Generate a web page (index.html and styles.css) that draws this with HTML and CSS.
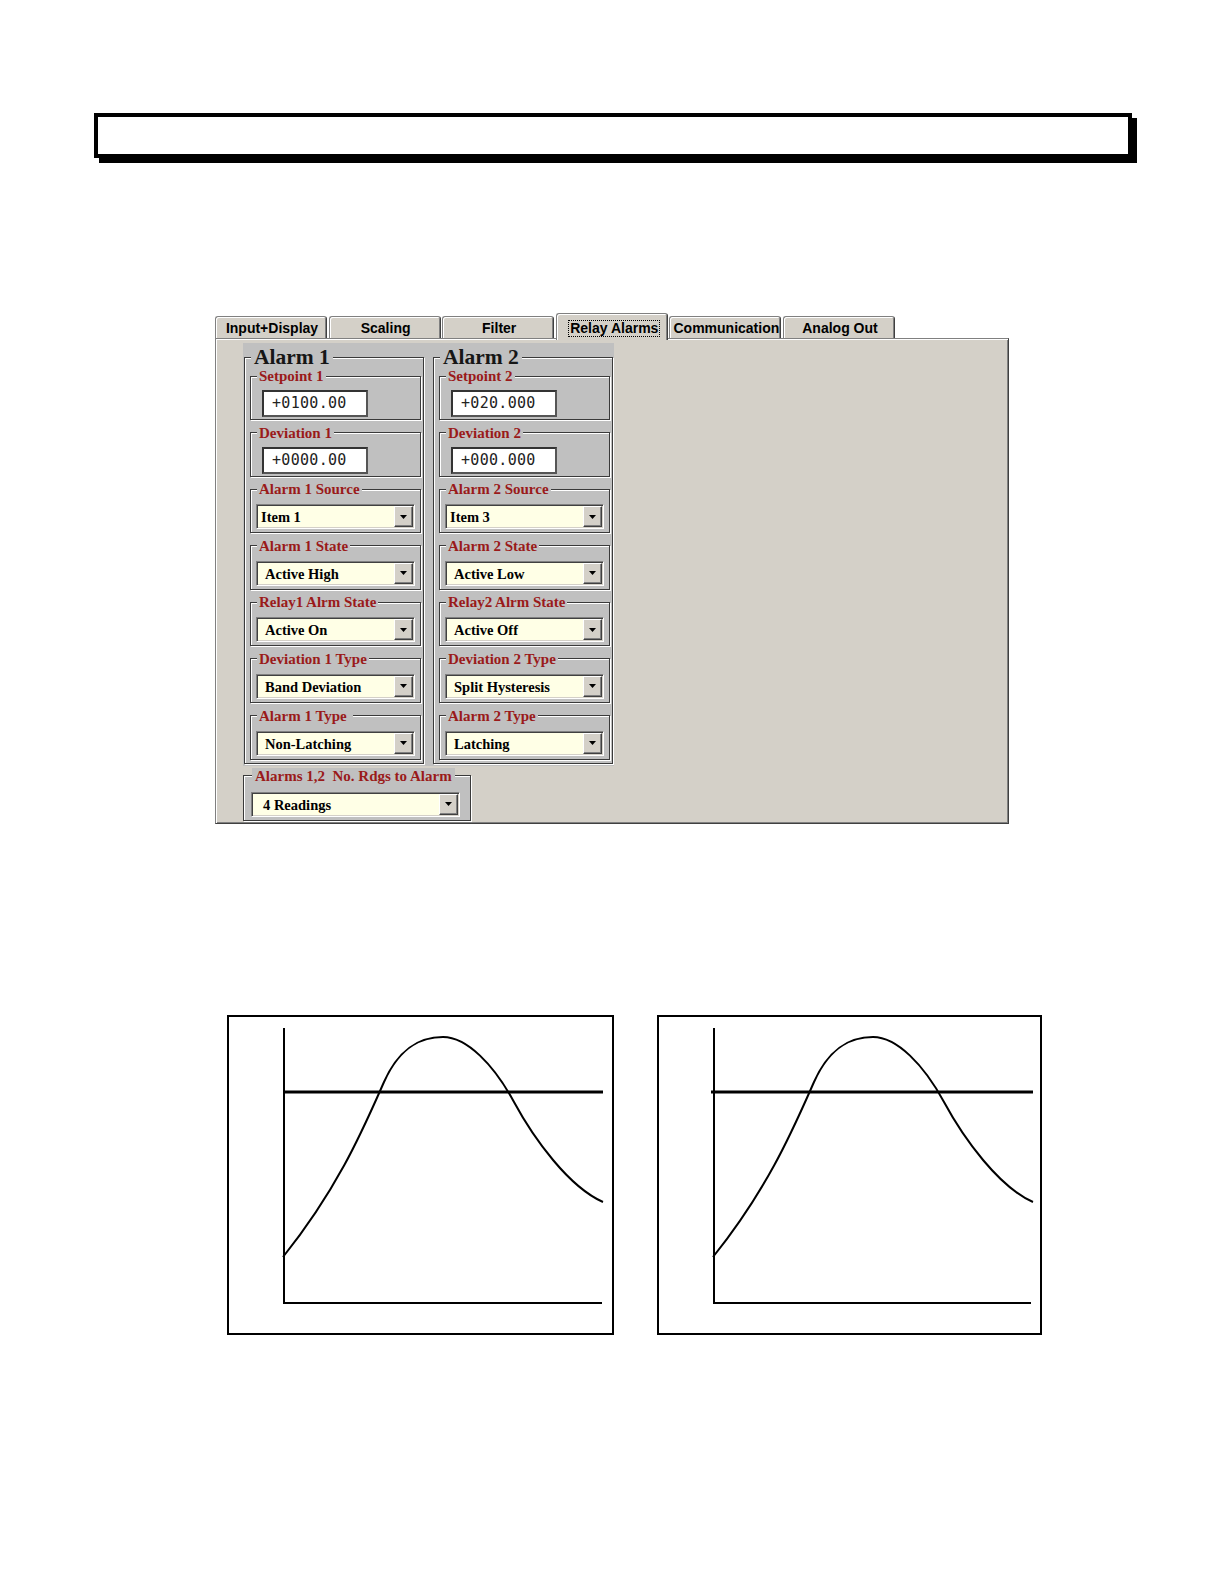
FILE: index.html
```html
<!DOCTYPE html>
<html>
<head>
<meta charset="utf-8">
<title>Relay Alarms</title>
<link rel="stylesheet" href="styles.css">
</head>
<body>
<div class="page">
  <div class="title-box"></div>

  <div class="tabctl">
    <div class="tabs">
      <div class="tab">Input+Display</div>
      <div class="tab">Scaling</div>
      <div class="tab">Filter</div>
      <div class="tab tab-active"><span class="focus">Relay Alarms</span></div>
      <div class="tab">Communication</div>
      <div class="tab">Analog Out</div>
    </div>
    <div class="panel">
      <div class="alarms">
        <fieldset class="alarm">
          <legend class="alarm-title">Alarm 1</legend>
          <fieldset class="sub sub-num"><legend>Setpoint 1</legend><div class="num">+0100.00</div></fieldset>
          <fieldset class="sub sub-num"><legend>Deviation 1</legend><div class="num">+0000.00</div></fieldset>
          <fieldset class="sub"><legend>Alarm 1 Source</legend><div class="combo"><span class="val">Item 1</span><span class="btn"><svg width="7" height="4" viewBox="0 0 7 4"><polygon points="0,0 7,0 3.5,4" fill="#000"/></svg></span></div></fieldset>
          <fieldset class="sub"><legend>Alarm 1 State</legend><div class="combo"><span class="val ind">Active High</span><span class="btn"><svg width="7" height="4" viewBox="0 0 7 4"><polygon points="0,0 7,0 3.5,4" fill="#000"/></svg></span></div></fieldset>
          <fieldset class="sub"><legend>Relay1 Alrm State</legend><div class="combo"><span class="val ind">Active On</span><span class="btn"><svg width="7" height="4" viewBox="0 0 7 4"><polygon points="0,0 7,0 3.5,4" fill="#000"/></svg></span></div></fieldset>
          <fieldset class="sub"><legend>Deviation 1 Type</legend><div class="combo"><span class="val ind">Band Deviation</span><span class="btn"><svg width="7" height="4" viewBox="0 0 7 4"><polygon points="0,0 7,0 3.5,4" fill="#000"/></svg></span></div></fieldset>
          <fieldset class="sub"><legend>Alarm 1 Type&nbsp;</legend><div class="combo"><span class="val ind">Non-Latching</span><span class="btn"><svg width="7" height="4" viewBox="0 0 7 4"><polygon points="0,0 7,0 3.5,4" fill="#000"/></svg></span></div></fieldset>
        </fieldset>

        <fieldset class="alarm">
          <legend class="alarm-title">Alarm 2</legend>
          <fieldset class="sub sub-num"><legend>Setpoint 2</legend><div class="num">+020.000</div></fieldset>
          <fieldset class="sub sub-num"><legend>Deviation 2</legend><div class="num">+000.000</div></fieldset>
          <fieldset class="sub"><legend>Alarm 2 Source</legend><div class="combo"><span class="val">Item 3</span><span class="btn"><svg width="7" height="4" viewBox="0 0 7 4"><polygon points="0,0 7,0 3.5,4" fill="#000"/></svg></span></div></fieldset>
          <fieldset class="sub"><legend>Alarm 2 State</legend><div class="combo"><span class="val ind">Active Low</span><span class="btn"><svg width="7" height="4" viewBox="0 0 7 4"><polygon points="0,0 7,0 3.5,4" fill="#000"/></svg></span></div></fieldset>
          <fieldset class="sub"><legend>Relay2 Alrm State</legend><div class="combo"><span class="val ind">Active Off</span><span class="btn"><svg width="7" height="4" viewBox="0 0 7 4"><polygon points="0,0 7,0 3.5,4" fill="#000"/></svg></span></div></fieldset>
          <fieldset class="sub"><legend>Deviation 2 Type</legend><div class="combo"><span class="val ind">Split Hysteresis</span><span class="btn"><svg width="7" height="4" viewBox="0 0 7 4"><polygon points="0,0 7,0 3.5,4" fill="#000"/></svg></span></div></fieldset>
          <fieldset class="sub"><legend>Alarm 2 Type</legend><div class="combo"><span class="val ind">Latching</span><span class="btn"><svg width="7" height="4" viewBox="0 0 7 4"><polygon points="0,0 7,0 3.5,4" fill="#000"/></svg></span></div></fieldset>
        </fieldset>
      </div>

      <fieldset class="sub rdgs"><legend>Alarms 1,2&nbsp; No. Rdgs to Alarm</legend><div class="combo combo-wide"><span class="val ind2">4 Readings</span><span class="btn"><svg width="7" height="4" viewBox="0 0 7 4"><polygon points="0,0 7,0 3.5,4" fill="#000"/></svg></span></div></fieldset>
    </div>
  </div>

  <div class="graphs">
    <div class="graph">
      <svg class="plot" width="383" height="316">
        <line x1="55" y1="11" x2="55" y2="287" stroke="#000" stroke-width="2"/>
        <line x1="54" y1="286" x2="373" y2="286" stroke="#000" stroke-width="2"/>
        <line x1="54" y1="75" x2="374" y2="75" stroke="#000" stroke-width="3"/>
        <path d="M54,240 C110,170 135,110 155,65 C172,27 195,20 214,20 C238,20 265,48 285,85 C305,122 340,170 374,185" fill="none" stroke="#000" stroke-width="2"/>
      </svg>
    </div>
    <div class="graph graph-right">
      <svg class="plot" width="381" height="316">
        <line x1="55" y1="11" x2="55" y2="287" stroke="#000" stroke-width="2"/>
        <line x1="54" y1="286" x2="372" y2="286" stroke="#000" stroke-width="2"/>
        <line x1="52" y1="75" x2="374" y2="75" stroke="#000" stroke-width="3"/>
        <path d="M54,240 C110,170 135,110 155,65 C172,27 195,20 214,20 C238,20 265,48 285,85 C305,122 340,170 374,185" fill="none" stroke="#000" stroke-width="2"/>
      </svg>
    </div>
  </div>
</div>
</body>
</html>
```

FILE: styles.css
```css
html, body {
  margin: 0;
  padding: 0;
  background: #fff;
}

.page {
  width: 1224px;
  height: 1584px;
  overflow: hidden;
}

/* Title frame at top */
.title-box {
  margin: 113px 0 0 94px;
  width: 1038px;
  height: 45px;
  box-sizing: border-box;
  border: 4px solid #000;
  background: #fff;
  box-shadow: 5px 5px 0 #000;
}

/* Tab control */
.tabctl {
  margin: 155px 0 0 215px;
  width: 794px;
}

.tabs {
  display: flex;
  align-items: flex-end;
  gap: 1.6px;
}

.tab {
  width: 112px;
  height: 22px;
  box-sizing: border-box;
  padding-top: 3px;
  padding-left: 2px;
  background: #d4d0c8;
  border-top: 1px solid #808080;
  border-left: 1px solid #808080;
  border-right: 1px solid #404040;
  border-radius: 3px 3px 0 0;
  box-shadow: inset 1px 1px 0 #fff, inset -1px 0 0 #808080;
  font-family: "Liberation Sans", Arial, sans-serif;
  font-weight: bold;
  font-size: 14px;
  line-height: 16px;
  color: #000;
  text-align: center;
  white-space: nowrap;
}

.tab-active {
  position: relative;
  z-index: 1;
  height: 27px;
  margin-bottom: -2px;
  padding-top: 6px;
  padding-left: 5px;
}

.focus {
  display: inline-block;
  padding: 0 1px;
  line-height: 15px;
  border: 1px dotted #000;
}

.panel {
  height: 486px;
  box-sizing: border-box;
  padding: 4px 0 0 27px;
  background: #d4d0c8;
  border-top: 1px solid #808080;
  border-left: 1px solid #808080;
  border-right: 1px solid #404040;
  border-bottom: 1px solid #404040;
  box-shadow: inset 1px 1px 0 #fff, inset -1px -1px 0 #808080;
}

.alarms {
  display: flex;
  gap: 9px;
  width: 371px;
  box-sizing: border-box;
  padding: 3px 1px 2px 1px;
  background: #c0c0c0;
}

fieldset {
  margin: 0;
  min-width: 0;
  box-sizing: border-box;
  border: 1px solid #3a3a3a;
  box-shadow: inset 1px 1px 0 #fff, 1px 1px 0 #fff;
}

fieldset legend {
  background: #c0c0c0;
}

.alarm {
  flex: 0 0 180px;
  width: 180px;
  padding: 0 2px 3px 5px;
  background: #c0c0c0;
}

.alarm-title {
  margin-left: 1px;
  padding: 0 3px;
  font-family: "Liberation Serif", "Times New Roman", serif;
  font-weight: bold;
  font-size: 21.5px;
  line-height: 22px;
  color: #161616;
}

.sub {
  padding: 7px 5px 3px 5px;
  background: #c0c0c0;
}

.sub + .sub {
  margin-top: 4.6px;
}

.sub legend {
  margin-left: 1px;
  padding: 0 2px;
  font-family: "Liberation Serif", "Times New Roman", serif;
  font-weight: bold;
  font-size: 15px;
  line-height: 16px;
  color: #9a1a1a;
  white-space: nowrap;
}

.sub-num {
  padding-top: 6px;
  padding-bottom: 2px;
}

.num {
  margin-left: 6px;
  width: 106px;
  height: 27px;
  box-sizing: border-box;
  padding-left: 8px;
  background: #fff;
  border: 2px solid #333;
  border-right-color: #555;
  border-bottom-color: #555;
  font-family: "DejaVu Sans Mono", "Liberation Mono", monospace;
  font-size: 15px;
  letter-spacing: 0.3px;
  line-height: 23px;
  color: #222;
}

.combo {
  display: flex;
  align-items: stretch;
  width: 159px;
  height: 25px;
  box-sizing: border-box;
  background: #ffffe6;
  border: 1px solid;
  border-color: #808080 #fff #fff #808080;
  box-shadow: inset 1px 1px 0 #404040, inset -1px -1px 0 #d4d0c8;
  padding: 1px;
}

.val {
  flex: 1;
  padding: 1px 0 0 3px;
  font-family: "Liberation Serif", "Times New Roman", serif;
  font-weight: bold;
  font-size: 14.5px;
  line-height: 20px;
  color: #000;
  white-space: nowrap;
  overflow: hidden;
}

.val.ind {
  padding-left: 7px;
}

.val.ind2 {
  padding-left: 10px;
}

.btn {
  width: 19px;
  box-sizing: border-box;
  display: flex;
  align-items: center;
  justify-content: center;
  background: #d4d0c8;
  border-top: 1px solid #fff;
  border-left: 1px solid #fff;
  border-right: 1px solid #404040;
  border-bottom: 1px solid #404040;
  box-shadow: inset -1px -1px 0 #808080;
}

.rdgs {
  width: 228px;
  margin-top: 2px;
  padding: 8px 9px 3px 7px;
}

.rdgs legend {
  margin-left: 1px;
  padding: 0 3px;
}

.combo-wide {
  width: 209px;
}

/* Graphs */
.graphs {
  display: flex;
  gap: 43px;
  margin: 191px 0 0 227px;
}

.graph {
  width: 387px;
  height: 320px;
  box-sizing: border-box;
  border: 2px solid #000;
  overflow: hidden;
}

.graph-right {
  width: 385px;
}

.plot {
  display: block;
}
```
